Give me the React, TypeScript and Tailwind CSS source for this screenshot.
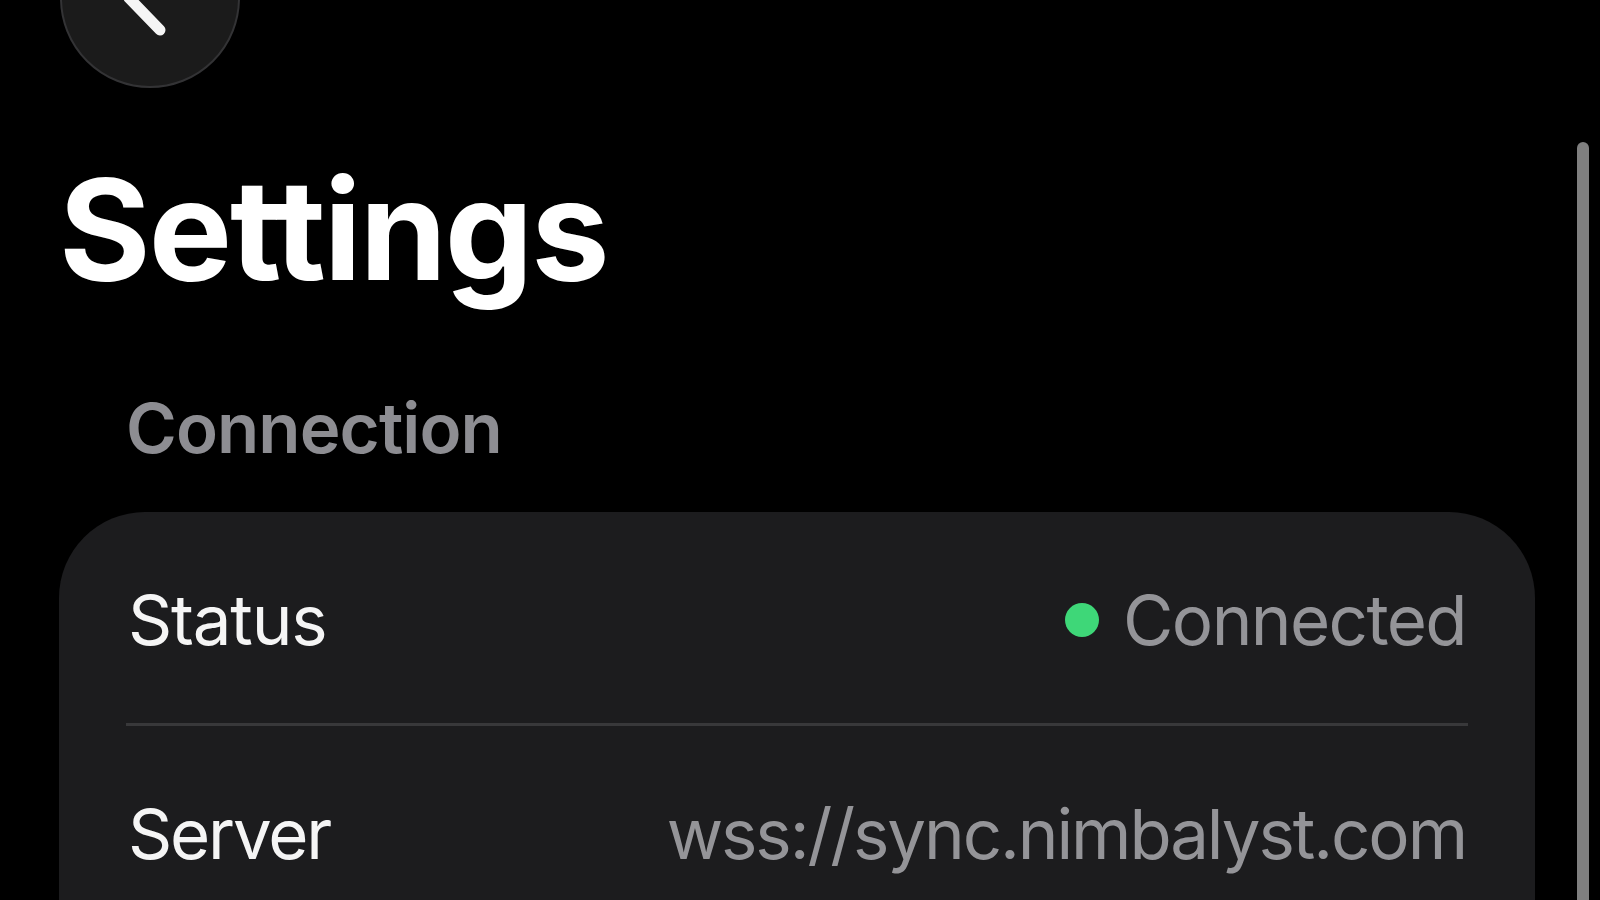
import React from "react";

export default function App() {
  return (
    <div
      className="relative w-[1600px] h-[900px] overflow-hidden bg-black"
      style={{ fontFamily: "Inter, 'Noto Sans', sans-serif" }}
    >
      <div className="flex flex-col pl-[59px] pr-[65px]">
        {/* Back button */}
        <div className="mt-[-92px] ml-px w-[180px] h-[180px] rounded-full bg-[#1b1b1b] border-2 border-[#333335] flex items-center justify-center">
          <svg width="180" height="180" viewBox="0 0 180 180" className="-m-[2px]">
            <path
              d="M 100 58 L 69 90 L 100 122"
              fill="none"
              stroke="#f5f5f5"
              strokeWidth="11"
              strokeLinecap="round"
              strokeLinejoin="round"
            />
          </svg>
        </div>

        {/* Title */}
        <h1 className="mt-[71px] ml-[0px] text-[140px] leading-none font-bold text-white tracking-[-2px]">
          Settings
        </h1>

        {/* Section header */}
        <div className="mt-[95px] ml-[67px] text-[69px] leading-none font-semibold text-[#8d8d92] tracking-[-0.9px]">
          Connection
        </div>

        {/* Card */}
        <div className="mt-[49px] mb-[-200px] pb-[200px] rounded-[86px] bg-[#1c1c1e] flex flex-col">
          <div className="h-[211px] pt-[5px] px-[69px] flex items-center justify-between">
            <span className="text-[69px] leading-none text-[#f5f5f5] tracking-[-1.2px]">Status</span>
            <div className="flex items-center gap-[24px]">
              <span className="w-[34px] h-[34px] rounded-full bg-[#3ed778]" />
              <span className="text-[69px] leading-none text-[#949498] tracking-[-1.6px]">Connected</span>
            </div>
          </div>
          <div className="mx-[67px] h-[3px] bg-[#38383a]" />
          <div className="h-[211px] pt-[5px] px-[69px] flex items-center justify-between">
            <span className="text-[69px] leading-none text-[#f5f5f5] tracking-[-2.2px]">Server</span>
            <span className="text-[69px] leading-none text-[#949498] tracking-[-2.1px]">wss://sync.nimbalyst.com</span>
          </div>
        </div>
      </div>

      {/* Scrollbar overlay */}
      <div className="absolute left-[1577px] top-[142px] w-[12px] h-[800px] rounded-full bg-[#7f7f7f]" />
    </div>
  );
}
